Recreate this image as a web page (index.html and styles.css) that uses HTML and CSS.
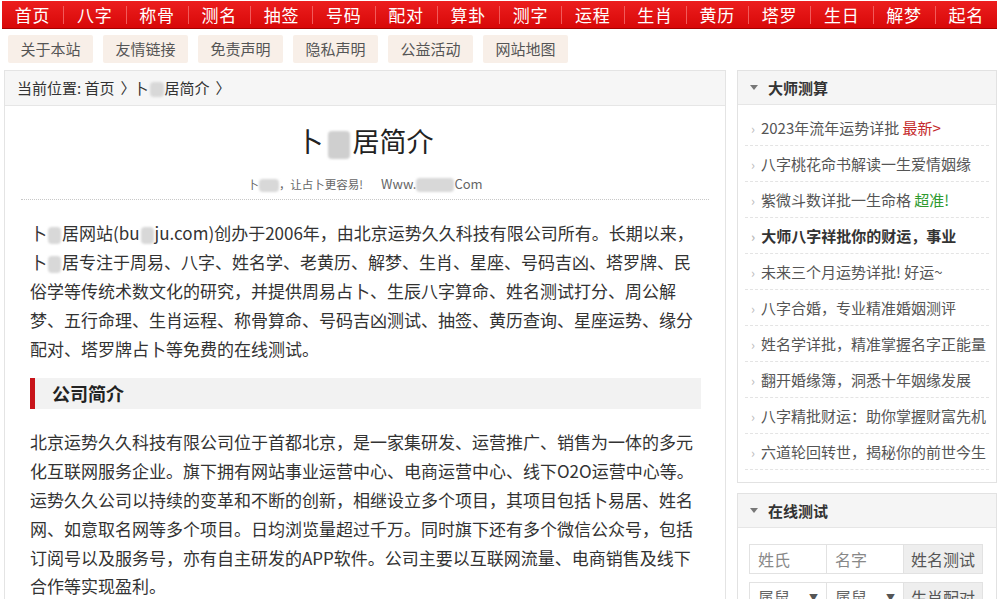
FILE: index.html
```html
<!DOCTYPE html>
<html lang="zh-CN">
<head>
<meta charset="UTF-8" />
<meta name="viewport" content="width=device-width, initial-scale=1" />
<title>卜易居简介</title>
<link rel="stylesheet" href="styles.css">
</head>
<body>

<div class="page">
  <nav class="topnav">
    <a href="#">首页</a>
    <a href="#">八字</a>
    <a href="#">称骨</a>
    <a href="#">测名</a>
    <a href="#">抽签</a>
    <a href="#">号码</a>
    <a href="#">配对</a>
    <a href="#">算卦</a>
    <a href="#">测字</a>
    <a href="#">运程</a>
    <a href="#">生肖</a>
    <a href="#">黄历</a>
    <a href="#">塔罗</a>
    <a href="#">生日</a>
    <a href="#">解梦</a>
    <a href="#">起名</a>
  </nav>

  <div class="subnav">
    <a href="#">关于本站</a>
    <a href="#">友情链接</a>
    <a href="#">免责声明</a>
    <a href="#">隐私声明</a>
    <a href="#">公益活动</a>
    <a href="#">网站地图</a>
  </div>

  <div class="main">
    <div class="content">
      <div class="crumb">当前位置: 首页<span class="gt">〉</span>卜<span class="blur b-crumb"></span>居简介<span class="gt">〉</span></div>

      <div class="article">
        <div class="art-head">
          <h1>卜<span class="blur b-title"></span>居简介</h1>
          <p class="slogan">卜<span class="blur b-s1"></span>，让占卜更容易!<span class="url">Www.<span class="blur b-s2"></span>Com</span></p>
        </div>

        <p class="text">卜<span class="blur b-txt"></span>居网站(bu<span class="blur b-txt"></span>ju.com)创办于2006年，由北京运势久久科技有限公司所有。长期以来，卜<span class="blur b-txt"></span>居专注于周易、八字、姓名学、老黄历、解梦、生肖、星座、号码吉凶、塔罗牌、民俗学等传统术数文化的研究，并提供周易占卜、生辰八字算命、姓名测试打分、周公解梦、五行命理、生肖运程、称骨算命、号码吉凶测试、抽签、黄历查询、星座运势、缘分配对、塔罗牌占卜等免费的在线测试。</p>

        <h2 class="sec-title">公司简介</h2>

        <p class="text">北京运势久久科技有限公司位于首都北京，是一家集研发、运营推广、销售为一体的多元化互联网服务企业。旗下拥有网站事业运营中心、电商运营中心、线下O2O运营中心等。运势久久公司以持续的变革和不断的创新，相继设立多个项目，其项目包括卜易居、姓名网、如意取名网等多个项目。日均浏览量超过千万。同时旗下还有多个微信公众号，包括订阅号以及服务号，亦有自主研发的APP软件。公司主要以互联网流量、电商销售及线下合作等实现盈利。</p>
      </div>
    </div>

    <aside class="side">
      <div class="box">
        <div class="box-head"><span class="tri"></span>大师测算</div>
        <ul class="list">
          <li>2023年流年运势详批 <span class="red">最新&gt;</span></li>
          <li class="red">八字桃花命书解读一生爱情姻缘</li>
          <li>紫微斗数详批一生命格 <span class="green">超准!</span></li>
          <li class="strong">大师八字祥批你的财运，事业</li>
          <li>未来三个月运势详批! 好运~</li>
          <li class="red">八字合婚，专业精准婚姻测评</li>
          <li>姓名学详批，精准掌握名字正能量</li>
          <li class="blue">翻开婚缘簿，洞悉十年姻缘发展</li>
          <li>八字精批财运：助你掌握财富先机</li>
          <li>六道轮回转世，揭秘你的前世今生</li>
        </ul>
      </div>

      <div class="box">
        <div class="box-head"><span class="tri"></span>在线测试</div>
        <form class="test">
          <input type="text" placeholder="姓氏" />
          <input type="text" placeholder="名字" />
          <button type="button">姓名测试</button>
          <div class="sel">属鼠<span class="arrow">▼</span></div>
          <div class="sel">属鼠<span class="arrow">▼</span></div>
          <button type="button">生肖配对</button>
        </form>
      </div>
    </aside>
  </div>
</div>

</body>
</html>
```

FILE: styles.css
```css
/* base */
body {
  margin: 0;
  background: #fff;
  font-family: "Noto Sans CJK SC", "Microsoft YaHei", "Noto Sans", sans-serif;
  color: #333;
}

a {
  text-decoration: none;
}

.page {
  width: 995px;
  margin-left: 2px;
}

/* top red menu */
.topnav {
  display: flex;
  align-items: center;
  height: 27px;
  margin-top: 1px;
  background: linear-gradient(#ec1e1e, #d80808);
  border-bottom: 1px solid #a80000;
}

.topnav a {
  flex: 1;
  height: 18px;
  line-height: 18px;
  text-align: center;
  color: #fff;
  font-size: 17px;
  letter-spacing: 1px;
  border-left: 1px solid #f25a5a;
}

.topnav a:first-child {
  border-left: none;
}

/* second row */
.subnav {
  display: flex;
  gap: 10px;
  padding: 6px 0 0 6px;
}

.subnav a {
  width: 85px;
  height: 28px;
  line-height: 28px;
  text-align: center;
  background: #f8efe8;
  color: #555;
  font-size: 15px;
  border-radius: 2px;
}

/* layout */
.main {
  display: flex;
  gap: 11px;
  margin-top: 7px;
}

.content {
  width: 721px;
  margin-left: 2px;
  border: 1px solid #e4e4e4;
  border-bottom: none;
}

.side {
  width: 260px;
}

/* blurred bits */
.blur {
  display: inline-block;
  background: #d8d8d8;
  border-radius: 4px;
  filter: blur(1.2px);
  vertical-align: middle;
}

.b-crumb { width: 14px; height: 15px; margin: 0 1px; }
.b-title { width: 22px; height: 28px; margin: 0 3px 0 4px; background: #cfcfcf; }
.b-txt { width: 13px; height: 17px; margin: 0 1px; }
.b-s1 { width: 20px; height: 13px; }
.b-s2 { width: 38px; height: 14px; }

/* breadcrumb */
.crumb {
  height: 34px;
  line-height: 34px;
  padding-left: 12px;
  background: #f6f6f6;
  border-bottom: 1px solid #e6e6e6;
  font-size: 15px;
  color: #333;
}

.crumb .gt {
  margin: 0 -2px 0 6px;
}

/* article */
.article {
  padding: 0 16px;
}

.art-head {
  padding-top: 17px;
  padding-bottom: 7px;
  border-bottom: 1px dotted #c8c8c8;
  text-align: center;
}

.art-head h1 {
  margin: 0;
  font-size: 27px;
  line-height: 36px;
  font-weight: normal;
  color: #222;
}

.slogan {
  margin: 17px 0 0;
  font-size: 11.5px;
  line-height: 16px;
  color: #666;
}

.slogan .url {
  margin-left: 18px;
  font-size: 13px;
}

.text {
  width: 671px;
  margin: 19px 0 0 9px;
  font-size: 17px;
  line-height: 28.8px;
  color: #333;
}

.sec-title {
  width: 649px;
  margin: 15px 0 0 9px;
  padding-left: 17px;
  height: 31px;
  line-height: 31px;
  background: #f2f2f2;
  border-left: 5px solid #c8141a;
  font-size: 18px;
  font-weight: bold;
  color: #222;
}

/* sidebar boxes */
.box {
  border: 1px solid #e2e2e2;
  margin-bottom: 10px;
}

.box-head {
  display: flex;
  align-items: center;
  height: 33px;
  padding-left: 12px;
  background: #f5f5f5;
  border-bottom: 1px solid #e6e6e6;
  font-size: 15px;
  font-weight: bold;
  color: #333;
}

.tri {
  width: 0;
  height: 0;
  margin-right: 10px;
  border-left: 4px solid transparent;
  border-right: 4px solid transparent;
  border-top: 5px solid #777;
}

.list {
  list-style: none;
  margin: 0 7px;
  padding: 5px 0 12px;
}

.list li {
  height: 35px;
  line-height: 35px;
  padding-left: 6px;
  border-bottom: 1px dashed #e4e4e4;
  font-size: 15px;
  color: #555;
  white-space: nowrap;
  overflow: hidden;
}

.list li::before {
  content: "›";
  margin-right: 6px;
  color: #bbb;
  font-size: 13px;
}

.red { color: #c4292b; }
.green { color: #2f9a2f; }
.blue { color: #2b2b7d; }
.list li.strong { font-weight: bold; color: #333; }

/* test form */
.test {
  display: grid;
  grid-template-columns: 78px 77px 79px;
  row-gap: 8px;
  padding: 16px 13px 14px 11px;
}

.test input,
.test .sel,
.test button {
  box-sizing: border-box;
  height: 30px;
  margin: 0;
  border: 1px solid #e2e2e2;
  font-family: inherit;
  font-size: 16px;
  color: #666;
  background: #fff;
}

.test input {
  padding: 0 8px;
  outline: none;
}

.test input + input,
.test .sel + .sel {
  border-left: none;
}

.test input::placeholder {
  color: #888;
}

.test button {
  border-left: none;
  background: #eee;
  color: #555;
  padding: 0;
}

.test .sel {
  display: flex;
  justify-content: space-between;
  align-items: center;
  padding: 0 8px;
}

.arrow {
  font-size: 9px;
  color: #555;
}
```
